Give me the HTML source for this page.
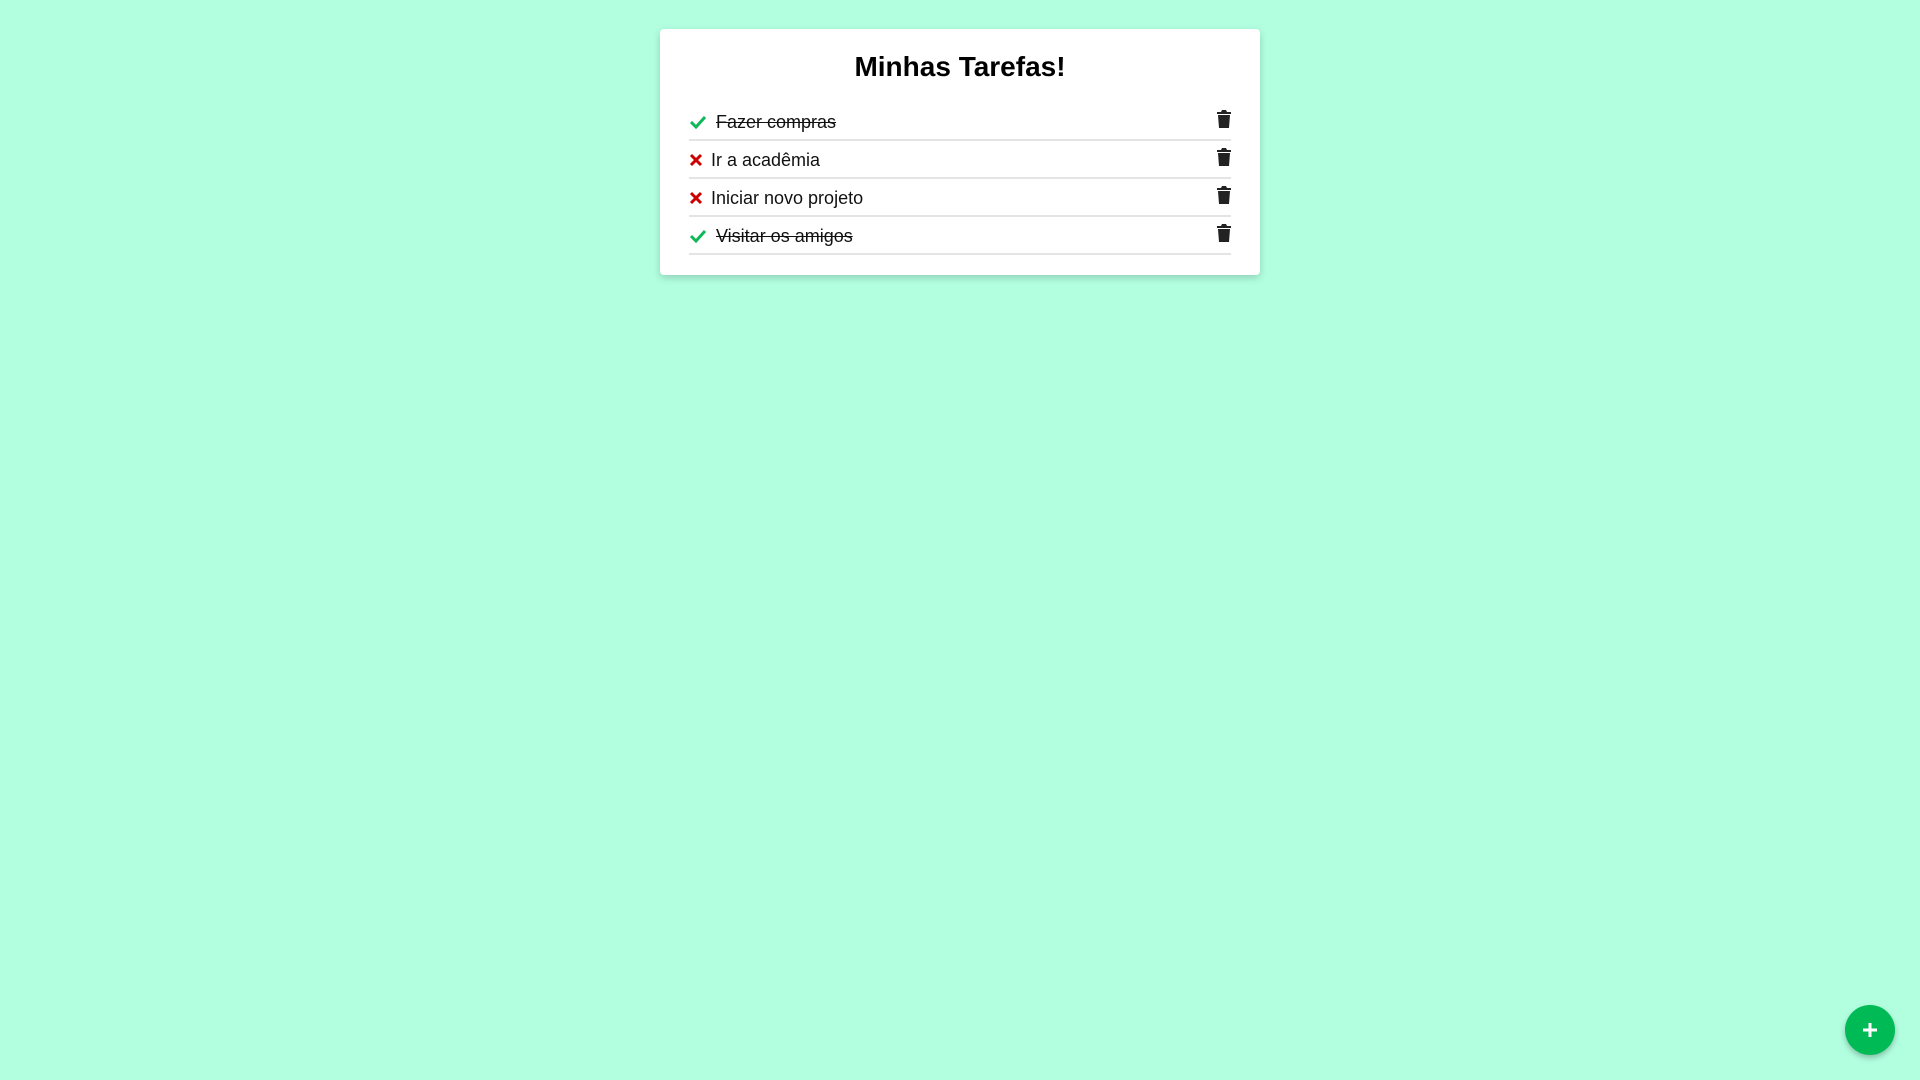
<!DOCTYPE html>
<html><head><meta charset="utf-8"><style>
body{margin:0;width:1920px;height:1080px;background:#b2ffe0;font-family:"Liberation Sans",sans-serif;position:relative;overflow:hidden}
.card{position:absolute;left:660px;top:29px;width:600px;height:246px;background:#fff;border-radius:4px;box-shadow:0 3px 8px rgba(0,0,0,.18)}
h1{margin:0;position:absolute;top:21px;left:0;width:100%;text-align:center;font-size:28px;font-weight:bold;line-height:34px;color:#000}
.row{position:absolute;left:29px;width:542px;height:36px;border-bottom:2px solid #e4e4e4;font-size:18px;color:#111}
.row span{position:absolute;top:9px}
.done{text-decoration:line-through}
.ic{position:absolute;left:0;top:12px}
.tr{position:absolute;right:0;top:7px}
.fab{position:absolute;left:1845px;top:1005px;width:50px;height:50px;border-radius:50%;background:#00bb55;box-shadow:0 3px 6px rgba(0,0,0,.25)}
</style></head><body>
<div class="card">
<h1>Minhas Tarefas!</h1>
<div class="row" style="top:74px"><svg class="ic" width="18" height="14" viewBox="0 0 18 14"><path d="M2 7l5 5 9-10" stroke="#11b85a" stroke-width="3" fill="none"/></svg><span class="done" style="left:27px">Fazer compras</span><svg class="tr" width="14" height="18" viewBox="0 0 14 18"><path d="M0 2h4l1-2h4l1 2h4v2H0zM1 5h12l-1 13H2z" fill="#222"/></svg></div>
<div class="row" style="top:112px"><svg class="ic" width="14" height="14" viewBox="0 0 14 14"><path d="M2 2l10 10M12 2L2 12" stroke="#c00" stroke-width="3"/></svg><span style="left:22px">Ir a acadêmia</span><svg class="tr" width="14" height="18" viewBox="0 0 14 18"><path d="M0 2h4l1-2h4l1 2h4v2H0zM1 5h12l-1 13H2z" fill="#222"/></svg></div>
<div class="row" style="top:150px"><svg class="ic" width="14" height="14" viewBox="0 0 14 14"><path d="M2 2l10 10M12 2L2 12" stroke="#c00" stroke-width="3"/></svg><span style="left:22px">Iniciar novo projeto</span><svg class="tr" width="14" height="18" viewBox="0 0 14 18"><path d="M0 2h4l1-2h4l1 2h4v2H0zM1 5h12l-1 13H2z" fill="#222"/></svg></div>
<div class="row" style="top:188px"><svg class="ic" width="18" height="14" viewBox="0 0 18 14"><path d="M2 7l5 5 9-10" stroke="#11b85a" stroke-width="3" fill="none"/></svg><span class="done" style="left:27px">Visitar os amigos</span><svg class="tr" width="14" height="18" viewBox="0 0 14 18"><path d="M0 2h4l1-2h4l1 2h4v2H0zM1 5h12l-1 13H2z" fill="#222"/></svg></div>
</div>
<div class="fab"><svg width="50" height="50" viewBox="0 0 50 50"><path d="M25 18v14M18 25h14" stroke="#fff" stroke-width="3"/></svg></div>
</body></html>
